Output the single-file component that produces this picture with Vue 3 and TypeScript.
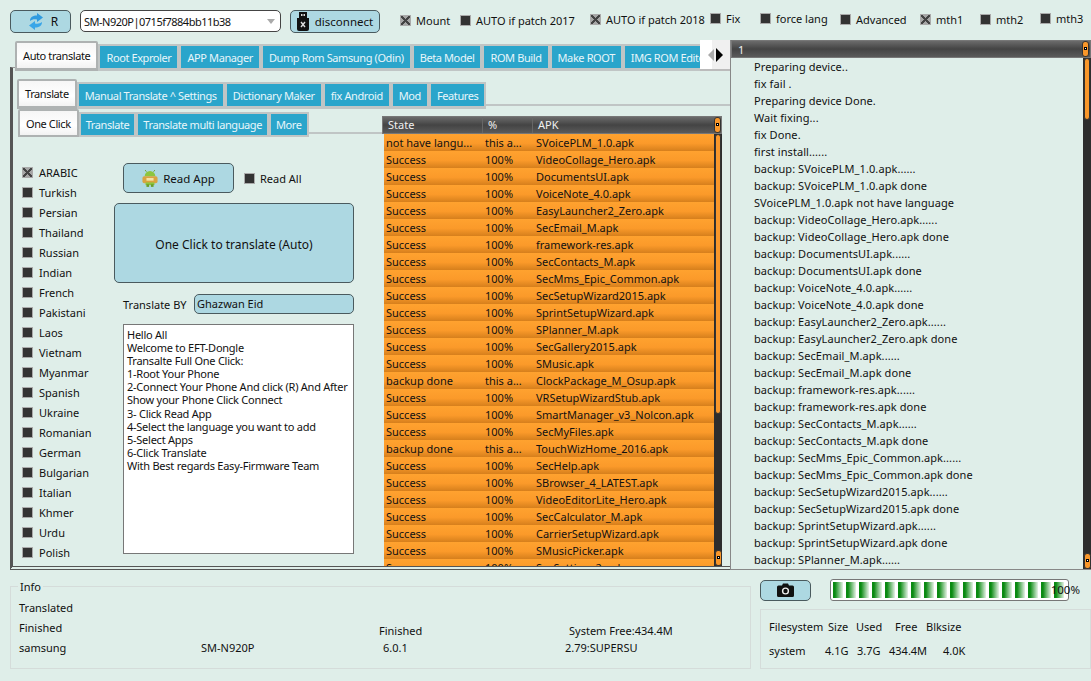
<script setup lang="ts">
const options = [
  { label: 'Mount', w: 60, on: true, dy: 0 },
  { label: 'AUTO if patch 2017', w: 130, on: false, dy: 0 },
  { label: 'AUTO if patch 2018', w: 120, on: true, dy: -1 },
  { label: 'Fix', w: 50, on: false, dy: -2 },
  { label: 'force lang', w: 80, on: false, dy: -2 },
  { label: 'Advanced', w: 80, on: false, dy: -1 },
  { label: 'mth1', w: 60, on: true, dy: -1 },
  { label: 'mth2', w: 60, on: false, dy: -1 },
  { label: 'mth3', w: 50, on: false, dy: -2 },
]

const mainTabs = ['Root Exproler', 'APP Manager', 'Dump Rom Samsung (Odin)', 'Beta Model', 'ROM Build', 'Make ROOT', 'IMG ROM Editor']
const subTabs = ['Manual Translate ^ Settings', 'Dictionary Maker', 'fix Android', 'Mod', 'Features']
const innerTabs = ['Translate', 'Translate multi language', 'More']

const languages = ['ARABIC', 'Turkish', 'Persian', 'Thailand', 'Russian', 'Indian', 'French', 'Pakistani', 'Laos', 'Vietnam', 'Myanmar', 'Spanish', 'Ukraine', 'Romanian', 'German', 'Bulgarian', 'Italian', 'Khmer', 'Urdu', 'Polish']

const help = [
  'Hello All',
  'Welcome to EFT-Dongle',
  'Transalte Full One Click:',
  '1-Root Your Phone',
  '2-Connect Your Phone And click (R) And After',
  'Show your Phone Click Connect',
  '3- Click Read App',
  '4-Select the language you want to add',
  '5-Select Apps',
  '6-Click Translate',
  'With Best regards Easy-Firmware Team',
]

const apks = [
  ['not have langu...', 'this a...', 'SVoicePLM_1.0.apk'],
  ['Success', '100%', 'VideoCollage_Hero.apk'],
  ['Success', '100%', 'DocumentsUI.apk'],
  ['Success', '100%', 'VoiceNote_4.0.apk'],
  ['Success', '100%', 'EasyLauncher2_Zero.apk'],
  ['Success', '100%', 'SecEmail_M.apk'],
  ['Success', '100%', 'framework-res.apk'],
  ['Success', '100%', 'SecContacts_M.apk'],
  ['Success', '100%', 'SecMms_Epic_Common.apk'],
  ['Success', '100%', 'SecSetupWizard2015.apk'],
  ['Success', '100%', 'SprintSetupWizard.apk'],
  ['Success', '100%', 'SPlanner_M.apk'],
  ['Success', '100%', 'SecGallery2015.apk'],
  ['Success', '100%', 'SMusic.apk'],
  ['backup done', 'this a...', 'ClockPackage_M_Osup.apk'],
  ['Success', '100%', 'VRSetupWizardStub.apk'],
  ['Success', '100%', 'SmartManager_v3_Nolcon.apk'],
  ['Success', '100%', 'SecMyFiles.apk'],
  ['backup done', 'this a...', 'TouchWizHome_2016.apk'],
  ['Success', '100%', 'SecHelp.apk'],
  ['Success', '100%', 'SBrowser_4_LATEST.apk'],
  ['Success', '100%', 'VideoEditorLite_Hero.apk'],
  ['Success', '100%', 'SecCalculator_M.apk'],
  ['Success', '100%', 'CarrierSetupWizard.apk'],
  ['Success', '100%', 'SMusicPicker.apk'],
  ['Success', '100%', 'SecSettings2.apk'],
]

const backedUp = ['VideoCollage_Hero', 'DocumentsUI', 'VoiceNote_4.0', 'EasyLauncher2_Zero', 'SecEmail_M', 'framework-res', 'SecContacts_M', 'SecMms_Epic_Common', 'SecSetupWizard2015', 'SprintSetupWizard']
const log = [
  'Preparing device..',
  'fix fail .',
  'Preparing device Done.',
  'Wait fixing...',
  'fix Done.',
  'first install......',
  'backup: SVoicePLM_1.0.apk......',
  'backup: SVoicePLM_1.0.apk done',
  'SVoicePLM_1.0.apk not have language',
  ...backedUp.flatMap(n => [`backup: ${n}.apk......`, `backup: ${n}.apk done`]),
  'backup: SPlanner_M.apk......',
]
</script>

<template>
  <div class="app">
    <div class="topbar">
      <button class="btn r-btn">
        <svg width="14" height="17" viewBox="0 0 14 17">
          <path d="M1 8 C1 4 4 2.500 8 2.500 L8 0 L14 4.500 L8 9 L8 6.500 C5 6 3 6.500 1 8Z" fill="#2f9be0" />
          <path d="M13 9 C13 13 10 14.500 6 14.500 L6 17 L0 12.500 L6 8 L6 10.500 C9 11 11 10.500 13 9Z" fill="#3aa6e8" />
        </svg>
        <span>R</span>
      </button>
      <div class="combo">
        <span class="combo-text">SM-N920P|0715f7884bb11b38</span>
        <i class="combo-arrow"></i>
      </div>
      <button class="btn usb-btn">
        <svg width="12" height="19" viewBox="0 0 12 19">
          <path d="M2 0H10V6H2Z" fill="#111" />
          <path d="M4 2H5.500V4H4ZM6.500 2H8V4H6.500Z" fill="#ddd" />
          <path d="M0 6H12V17Q12 19 10 19H2Q0 19 0 17Z" fill="#111" />
          <path d="M4 10L8 15M8 10L4 15" stroke="#ddd" stroke-width="1.400" />
        </svg>
        <span>disconnect</span>
      </button>
      <div class="options">
        <label v-for="o in options" :key="o.label" class="check" :style="{ width: o.w + 'px', top: o.dy + 'px' }">
          <i class="box" :class="{ on: o.on }"></i>{{ o.label }}
        </label>
      </div>
    </div>

    <div class="main">
      <div class="left">
        <div class="tabs level1">
          <span class="tab active">Auto translate</span>
          <span v-for="t in mainTabs" :key="t" class="tab">{{ t }}</span>
          <div class="scroller">
            <i class="arr-left"></i>
            <i class="arr-right"></i>
          </div>
        </div>
        <div class="pane">
          <div class="tabs level2">
            <span class="tab active">Translate</span>
            <span v-for="t in subTabs" :key="t" class="tab">{{ t }}</span>
            <i class="tabline"></i>
          </div>
          <div class="subpane">
            <div class="workspace">
              <div class="tabs level3">
                <span class="tab active">One Click</span>
                <span v-for="t in innerTabs" :key="t" class="tab">{{ t }}</span>
                <i class="tabline"></i>
              </div>
              <div class="form">
                <ul class="langs">
                  <li v-for="(l, i) in languages" :key="l" class="check">
                    <i class="box" :class="{ on: i === 0 }"></i>{{ l }}
                  </li>
                </ul>
                <div class="actions">
                  <div class="read-row">
                    <button class="btn read-btn">
                      <svg width="16" height="18" viewBox="0 0 18 20">
                        <path d="M3 8 A6 6 0 0 1 15 8Z" fill="#8cc63f" />
                        <path d="M5 3L3.500 1M13 3L14.500 1" stroke="#6b9e2a" stroke-width="1" />
                        <rect x="0.500" y="8" width="17" height="8" rx="2" fill="#d9a441" />
                        <rect x="4" y="15" width="10" height="3" fill="#8cc63f" />
                        <rect x="5" y="17" width="3" height="3" fill="#6b9e2a" />
                        <rect x="10" y="17" width="3" height="3" fill="#6b9e2a" />
                        <rect x="5" y="10" width="8" height="3" fill="#f3e3a8" />
                      </svg>
                      <span>Read App</span>
                    </button>
                    <label class="check"><i class="box"></i>Read All</label>
                  </div>
                  <button class="btn big-btn">One Click to translate (Auto)</button>
                  <div class="by-row">
                    <span class="by-label">Translate BY</span>
                    <div class="by-input">Ghazwan Eid</div>
                  </div>
                  <div class="help">
                    <div v-for="h in help" :key="h">{{ h }}</div>
                  </div>
                </div>
              </div>
            </div>

            <div class="apk-table">
              <div class="thead">
                <span class="c1">State</span>
                <span class="c2">%</span>
                <span class="c3">APK</span>
                <i class="corner"></i>
              </div>
              <div class="tbody">
                <div class="rows">
                  <div v-for="row in apks" :key="row[2]" class="row">
                    <span class="c1">{{ row[0] }}</span>
                    <span class="c2">{{ row[1] }}</span>
                    <span class="c3">{{ row[2] }}</span>
                  </div>
                </div>
                <div class="vscroll apk-scroll">
                  <div class="thumb"></div>
                  <div class="track"></div>
                  <i class="corner"></i>
                </div>
              </div>
            </div>
          </div>
        </div>
      </div>

      <div class="logpanel">
        <div class="thead log-head">
          <span>1</span>
          <i class="corner"></i>
        </div>
        <div class="log-body">
          <div class="log-lines">
            <div v-for="(l, i) in log" :key="i">{{ l }}</div>
          </div>
          <div class="vscroll log-scroll">
            <div class="thumb"></div>
            <div class="track"></div>
            <i class="corner"></i>
          </div>
        </div>
      </div>
    </div>

    <div class="bottom">
      <fieldset class="info">
        <legend>Info</legend>
        <div class="info-row first">Translated</div>
        <div class="info-row finished">
          <span class="i-wide">Finished</span>
          <span class="i3 low">Finished</span>
          <span class="low">System Free:434.4M</span>
        </div>
        <div class="info-row">
          <span class="i1">samsung</span>
          <span class="i2">SM-N920P</span>
          <span class="i3 ver">6.0.1</span>
          <span>2.79:SUPERSU</span>
        </div>
      </fieldset>
      <div class="status">
        <div class="status-top">
          <button class="btn cam-btn">
            <svg width="17" height="14" viewBox="0 0 17 14">
              <path d="M1.500 2.500H5L6 0.500H11L12 2.500H15.500Q17 2.500 17 4V12.500Q17 14 15.500 14H1.500Q0 14 0 12.500V4Q0 2.500 1.500 2.500Z" fill="#111" />
              <circle cx="8.500" cy="8" r="3.600" fill="#eee" />
              <circle cx="8.500" cy="8" r="2.200" fill="#111" />
            </svg>
          </button>
          <div class="progress">
            <div class="bar"></div>
            <span class="pct">100%</span>
          </div>
        </div>
        <div class="fs">
          <div class="fs-row">
            <span class="h1">Filesystem</span><span class="h2">Size</span><span class="h3">Used</span><span class="h4">Free</span><span>Blksize</span>
          </div>
          <div class="fs-row">
            <span class="v1">system</span><span class="v2">4.1G</span><span class="v3">3.7G</span><span class="v4">434.4M</span><span>4.0K</span>
          </div>
        </div>
      </div>
    </div>
  </div>
</template>

<style>
html, body { margin: 0; background: #dfeee9; }
</style>

<style scoped>
.app {
  width: 1091px;
  height: 681px;
  overflow: hidden;
  background: #dfeee9;
  font: 11px "Noto Sans", "Liberation Sans", sans-serif;
  color: #111;
  display: flex;
  flex-direction: column;
}

.btn {
  font: inherit;
  color: inherit;
  background: #add8e2;
  border: 1px solid #4a5a5e;
  border-radius: 5px;
  padding: 0;
  display: flex;
  align-items: center;
  justify-content: center;
}

/* top row */
.topbar {
  height: 40px;
  box-sizing: border-box;
  padding: 10px 0 0 10px;
  display: flex;
  align-items: flex-start;
}
.r-btn { width: 61px; height: 23px; gap: 8px; padding-left: 6px; font-size: 12px; }
.combo {
  width: 201px;
  height: 22px;
  box-sizing: border-box;
  margin-left: 9px;
  padding-left: 3px;
  background: #fff;
  border: 1px solid #444;
  border-radius: 5px;
  display: flex;
  align-items: center;
  justify-content: space-between;
}
.combo-text { letter-spacing: -0.5px; }
.combo-arrow {
  margin-right: 5px;
  border: 4px solid transparent;
  border-top: 5px solid #aaa;
  border-bottom: 0;
}
.usb-btn { width: 90px; height: 23px; margin-left: 9px; gap: 6px; font-size: 11.5px; }
.options { display: flex; margin-left: 20px; padding-top: 3px; }
.check { display: flex; align-items: center; gap: 5px; position: relative; white-space: nowrap; }
.box {
  width: 11px;
  height: 11px;
  flex: none;
  background: #333;
  border: 1px solid #aaa;
  box-sizing: border-box;
}
.box.on {
  background:
    linear-gradient(45deg, transparent 40%, #444 40%, #444 60%, transparent 60%),
    linear-gradient(-45deg, transparent 40%, #444 40%, #444 60%, transparent 60%),
    #a5a5a5;
}

/* main area */
.main { height: 530px; display: flex; }
.left { width: 730px; position: relative; }

.tabs { display: flex; align-items: flex-end; }
.tab {
  box-sizing: border-box;
  height: 27px;
  padding: 0 6px;
  flex: none;
  display: flex;
  align-items: center;
  white-space: nowrap;
  letter-spacing: -0.4px;
  color: #e8f6fa;
  background: #2aa5cb;
  border: 2px solid #c0c5c5;
  border-bottom-width: 3px;
}
.tab.active {
  height: 30px;
  color: #111;
  background: linear-gradient(#f6f6f6, #ffffff 60%, #f2f2f2);
  border-color: #aeb2b2;
  border-radius: 2px 2px 0 0;
}
.tabline {
  flex: 1;
  margin-bottom: 3px;
  height: 2px;
  background: #c0c5c5;
}

.level1 { height: 31px; padding-left: 15px; position: relative; overflow: hidden; }
.scroller {
  position: absolute;
  right: 0;
  top: 0;
  width: 30px;
  height: 31px;
  background: linear-gradient(90deg, #fff 0 12px, #f0f0f0 12px);
  border-bottom: 2px solid #bbb;
  box-sizing: border-box;
  display: flex;
  align-items: center;
  justify-content: center;
  gap: 2px;
}
.arr-left { border: 6px solid transparent; border-left: 0; border-right: 6px solid #aaa; }
.arr-right { border: 7px solid transparent; border-right: 0; border-left: 7px solid #000; }

.pane {
  margin: -4px 0 0 10px;
  height: 503px;
  box-sizing: border-box;
  border-left: 3px solid #555;
  border-top: 1px solid #999;
  border-bottom: 4px double #555;
  padding-top: 11px;
}
.level2 { padding-left: 4px; height: 30px; }
.subpane { display: flex; align-items: flex-start; height: 457px; }
.workspace { width: 370px; flex: none; }
.level3 { padding-left: 5px; height: 28px; }
.level3 .tab { height: 25px; border-bottom-width: 2px; padding: 0 5px; }
.level3 .tab.active { height: 28px; padding: 0 6px; }
.level3 .tabline { margin-bottom: 3px; }

.form { display: flex; padding-left: 9px; padding-top: 25px; }
.langs { list-style: none; margin: 0; padding: 0; width: 92px; flex: none; }
.langs li { height: 20px; gap: 6px; }
.actions { width: 240px; margin-top: 1px; }
.read-row { display: flex; align-items: center; padding-left: 9px; gap: 10px; }
.read-btn { width: 111px; height: 30px; gap: 5px; font-size: 11.5px; }
.big-btn { width: 240px; height: 80px; margin-top: 10px; padding-top: 2px; font-size: 12px; }
.by-row { display: flex; align-items: center; padding-left: 9px; margin-top: 11px; }
.by-label { width: 71px; }
.by-input {
  width: 160px;
  height: 20px;
  box-sizing: border-box;
  padding-left: 2px;
  background: #add8e2;
  border: 1px solid #4a5a5e;
  border-radius: 5px;
  line-height: 18px;
}
.help {
  margin: 10px 0 0 9px;
  width: 231px;
  height: 230px;
  box-sizing: border-box;
  padding: 3px;
  background: #fff;
  border: 1px solid #777;
  line-height: 13.1px;
  letter-spacing: -0.25px;
  white-space: nowrap;
}

/* tables */
.thead {
  height: 18px;
  display: flex;
  align-items: center;
  color: #f0f0f0;
  background: linear-gradient(#6b6b6b, #444 50%, #5a5a5a);
  border: 1px solid #777;
  box-sizing: border-box;
  position: relative;
}
.corner {
  display: block;
  width: 7px;
  height: 16px;
  box-sizing: border-box;
  background: #f9972a;
  border: 1px solid #333;
  border-radius: 3px;
  flex: none;
  position: relative;
}
.corner::after {
  content: "";
  position: absolute;
  left: 1px;
  top: 5px;
  width: 1px;
  height: 1px;
  background: #fff;
  border: 1px solid #000;
}
.thead .corner { position: absolute; right: 0; top: 0; }

.apk-table { width: 340px; margin: 7px 0 0 -1px; flex: none; }
.apk-table .thead span { box-sizing: border-box; padding-left: 5px; border-right: 1px solid #666; height: 100%; line-height: 16px; }
.apk-table .thead .c3 { border-right: 0; }
.c1 { width: 100px; flex: none; overflow: hidden; white-space: nowrap; }
.c2 { width: 50px; flex: none; }
.c3 { flex: 1; }
.tbody { height: 432px; display: flex; overflow: hidden; }
.rows { flex: 1; overflow: hidden; padding-left: 2px; }
.row {
  height: 17px;
  display: flex;
  align-items: center;
  line-height: 17px;
  background: linear-gradient(#ffa22f, #fb9a2a 55%, #d67f1c);
}
.row .c1 { padding-left: 2px; box-sizing: border-box; width: 99px; }
.row .c2 { padding-left: 2px; box-sizing: border-box; }
.row .c3 { padding-left: 3px; }

.vscroll {
  width: 8px;
  flex: none;
  display: flex;
  flex-direction: column;
  background: #2d2d2d;
}
.vscroll .track { flex: 1; }
.vscroll .corner { margin-left: 1px; }
.thumb { width: 6px; margin-left: 1px; background: #f9972a; border: 1px solid #333; border-radius: 3px; box-sizing: border-box; }
.apk-scroll .thumb { height: 280px; }
.log-scroll .thumb { height: 62px; }

.logpanel {
  width: 361px;
  box-sizing: border-box;
  border-left: 1px solid #888;
  border-bottom: 1px solid #888;
}
.log-head { padding-left: 6px; height: 18px; }
.log-head .corner { right: 1px; }
.log-body { display: flex; height: 511px; }
.log-lines { flex: 1; overflow: hidden; padding-left: 23px; line-height: 17px; letter-spacing: 0.08px; white-space: nowrap; }

/* bottom */
.bottom { flex: 1; display: flex; padding-left: 10px; align-items: flex-start; }
.info {
  margin: 9px 0 0;
  padding: 0 8px;
  width: 741px;
  height: 90px;
  box-sizing: border-box;
  border: 1px solid #d5dcda;
  min-inline-size: auto;
}
.info legend { padding: 0 2px; margin-left: -1px; }
.info-row { height: 20px; line-height: 20px; display: flex; }
.info-row.first { margin-top: 4px; }
.i-wide { width: 360px; }
.i1 { width: 182px; }
.i2 { width: 178px; }
.i3 { width: 190px; }
.i3.ver { width: 182px; padding-left: 4px; }
.low { position: relative; top: 3px; }

.status { width: 331px; margin-left: 9px; }
.status-top { display: flex; padding-top: 9px; align-items: center; }
.cam-btn { width: 51px; height: 21px; }
.progress {
  width: 239px;
  height: 22px;
  margin-left: 19px;
  box-sizing: border-box;
  padding: 2px;
  background: #fff;
  border: 1px solid #777;
  border-radius: 3px;
  position: relative;
}
.bar {
  height: 100%;
  background: repeating-linear-gradient(90deg, #0a8a12 0, #0a8a12 2px, #e6f2e6 10px, #fff 10px, #fff 13px);
}
.pct { position: absolute; right: -12px; top: 2px; line-height: 16px; font-size: 11.5px; }
.fs {
  margin-top: 8px;
  height: 60px;
  box-sizing: border-box;
  border: 1px solid #d5dcda;
  padding-left: 8px;
}
.fs-row { height: 24px; line-height: 24px; display: flex; white-space: nowrap; }
.fs-row:first-child { margin-top: 5px; }
.h1 { width: 59px; }
.h2 { width: 28px; }
.h3 { width: 39px; }
.h4 { width: 31px; }
.v1 { width: 56px; }
.v2 { width: 32px; }
.v3 { width: 32px; }
.v4 { width: 54px; }
</style>
